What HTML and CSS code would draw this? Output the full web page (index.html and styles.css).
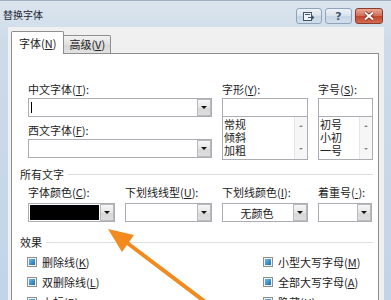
FILE: index.html
```html
<!DOCTYPE html>
<html lang="zh">
<head>
    <meta charset="UTF-8">
    <meta name="viewport" content="width=device-width, initial-scale=1.0">
    <title>替换字体</title>
    <link rel="stylesheet" href="styles.css">
</head>
<body>
    <div class="window">
        <!-- 标题栏 -->
        <div class="titlebar">
            <span class="title">替换字体</span>
            <div class="caption-btns">
                <span class="cbtn">
                    <svg width="13" height="9" viewBox="0 0 13 9"><rect x="0.5" y="0.5" width="8" height="8" fill="#eef3f8" stroke="#44566c"/><rect x="2" y="2" width="5" height="1" fill="#44566c"/><path d="M5 5.5h5.5M8.5 3.5l2 2-2 2" fill="none" stroke="#44566c" stroke-width="1.2"/></svg>
                </span>
                <span class="cbtn help">?</span>
                <span class="cbtn close">
                    <svg width="12" height="10" viewBox="0 0 12 10"><path d="M2 1.5l8 7M10 1.5l-8 7" stroke="#6b2418" stroke-width="3.6"/><path d="M2 1.5l8 7M10 1.5l-8 7" stroke="#fff" stroke-width="2"/></svg>
                </span>
            </div>
        </div>

        <div class="dialog">
            <div class="tabs">
                <span class="tab active">字体(<u>N</u>)</span>
                <span class="tab">高级(<u>V</u>)</span>
            </div>
            <div class="panel">
                <div class="font-grid">
                    <div>
                        <span class="field-label">中文字体(<u>T</u>):</span>
                        <div class="combo"><span class="field"><i class="caret"></i></span><span class="drop"></span></div>
                        <span class="field-label second">西文字体(<u>F</u>):</span>
                        <div class="combo"><span class="field"></span><span class="drop"></span></div>
                    </div>
                    <div>
                        <span class="field-label">字形(<u>Y</u>):</span>
                        <div class="textbox"></div>
                        <div class="listbox">
                            <ul><li>常规</li><li>倾斜</li><li>加粗</li></ul>
                            <div class="scroll"></div>
                        </div>
                    </div>
                    <div>
                        <span class="field-label">字号(<u>S</u>):</span>
                        <div class="textbox"></div>
                        <div class="listbox">
                            <ul><li>初号</li><li>小初</li><li>一号</li></ul>
                            <div class="scroll"></div>
                        </div>
                    </div>
                </div>

                <div class="group">所有文字</div>
                <div class="color-grid">
                    <div>
                        <span class="field-label">字体颜色(<u>C</u>):</span>
                        <div class="combo"><span class="field"><i class="swatch"></i></span><span class="drop"></span></div>
                    </div>
                    <div>
                        <span class="field-label">下划线线型(<u>U</u>):</span>
                        <div class="combo"><span class="field"></span><span class="drop"></span></div>
                    </div>
                    <div>
                        <span class="field-label">下划线颜色(<u>I</u>):</span>
                        <div class="combo"><span class="field center">无颜色</span><span class="drop"></span></div>
                    </div>
                    <div>
                        <span class="field-label">着重号(<u class="dot">·</u>):</span>
                        <div class="combo"><span class="field"></span><span class="drop"></span></div>
                    </div>
                </div>

                <div class="group">效果</div>
                <div class="effects">
                    <label class="check"><i class="box"></i><span>删除线(<u>K</u>)</span></label>
                    <label class="check"><i class="box"></i><span>小型大写字母(<u>M</u>)</span></label>
                    <label class="check"><i class="box"></i><span>双删除线(<u>L</u>)</span></label>
                    <label class="check"><i class="box"></i><span>全部大写字母(<u>A</u>)</span></label>
                    <label class="check"><i class="box"></i><span>上标(<u>P</u>)</span></label>
                    <label class="check"><i class="box"></i><span>隐藏(<u>H</u>)</span></label>
                </div>
            </div>
        </div>

        <!-- 橙色箭头 -->
        <svg class="arrow" viewBox="0 0 391 300">
            <line x1="122" y1="238" x2="208" y2="303" stroke="#f28a1e" stroke-width="4" stroke-linecap="round"/>
            <polygon points="108,228 134,234 122,251" fill="#f28a1e"/>
        </svg>
    </div>
</body>
</html>
```

FILE: styles.css
```css
body {
    margin: 0;
    font-family: "Noto Sans CJK SC", "Noto Sans", sans-serif;
    font-size: 11px;
    color: #222;
    background: #fff;
}
.window {
    position: relative;
    width: 391px;
    height: 300px;
    overflow: hidden;
    box-sizing: border-box;
    border-top: 1px solid #a3b2c2;
    background: linear-gradient(#dce5ee, #cddbe9 40px, #c1d4e8);
}
.titlebar {
    display: flex;
    align-items: flex-start;
    height: 26px;
    padding: 0 8px 0 3px;
}
.title {
    font-size: 10px;
    line-height: 26px;
    padding-top: 1px;
    color: #1b2533;
}
.caption-btns {
    margin-left: auto;
    margin-top: 7px;
    display: flex;
    gap: 3px;
}
.cbtn {
    width: 26px;
    height: 16px;
    box-sizing: border-box;
    border: 1px solid #8fa3ba;
    border-radius: 3px;
    background: linear-gradient(#edf2f7, #d8e2ec 50%, #c6d5e4 51%, #d2dfeb);
    display: flex;
    align-items: center;
    justify-content: center;
}
.cbtn.help {
    width: 27px;
    font-family: "DejaVu Sans", sans-serif;
    font-weight: bold;
    font-size: 11px;
    color: #42566e;
}
.cbtn.close {
    width: 28px;
    border-color: #8a3b2f;
    background: linear-gradient(#eaa896, #d36a55 50%, #c2432d 51%, #d46b50);
}
.dialog {
    margin: 0 7px 0 8px;
    padding: 4px 5px 0 3px;
    background: #f0f0f0;
    height: 300px;
}
.tabs {
    display: flex;
    align-items: flex-end;
}
.tab {
    border: 1px solid #8e8f8f;
    border-bottom: none;
    border-left: none;
    padding: 0 5px;
    height: 17px;
    line-height: 17px;
    background: linear-gradient(#f2f2f2, #e0e0e0 50%, #d6d6d6 51%, #e2e2e2);
    border-radius: 0 2px 0 0;
}
.tab.active {
    position: relative;
    z-index: 1;
    border-left: 1px solid #8e8f8f;
    padding: 0 7px;
    height: 22px;
    line-height: 22px;
    margin-bottom: -1px;
    background: #fff;
    border-radius: 2px 2px 0 0;
}
.panel {
    background: #fff;
    border: 1px solid #8e8f8f;
    height: 300px;
    padding: 27px 5px 0 8px;
}
.field-label {
    display: block;
    height: 16px;
    line-height: 16px;
    margin-bottom: 1px;
    white-space: nowrap;
}
.field-label.second {
    margin-top: 5px;
}
.dot {
    font-family: "Liberation Sans", sans-serif;
}
.font-grid {
    display: grid;
    grid-template-columns: 184px 86px 55px;
    column-gap: 10px;
    margin-left: 8px;
}
.combo {
    display: flex;
    height: 19px;
    box-sizing: border-box;
    border: 1px solid #abadb3;
    background: #fff;
}
.combo .field {
    flex: 1;
    position: relative;
    display: flex;
}
.combo .field.center {
    justify-content: center;
    align-items: center;
    padding-right: 2px;
}
.caret {
    position: absolute;
    left: 2px;
    top: 3px;
    width: 1px;
    height: 11px;
    background: #000;
}
.swatch {
    flex: 1;
    margin: 1px;
    background: #000;
}
.drop {
    width: 12px;
    border: 1px solid #b9b9b9;
    background: linear-gradient(#f5f5f5, #e6e6e6 50%, #d7d7d7 51%, #dedede);
    display: flex;
    align-items: center;
    justify-content: center;
}
.drop::after {
    content: "";
    border-left: 3px solid transparent;
    border-right: 3px solid transparent;
    border-top: 3px solid #111;
}
.textbox {
    height: 19px;
    box-sizing: border-box;
    border: 1px solid #abadb3;
    background: #fff;
}
.listbox {
    display: flex;
    height: 44px;
    margin-top: -1px;
    box-sizing: border-box;
    border: 1px solid #abadb3;
    background: #fff;
}
.listbox ul {
    flex: 1;
    margin: 0;
    padding: 1px 0 0 1px;
    list-style: none;
    line-height: 13px;
}
.scroll {
    width: 12px;
    border-left: 1px solid #e6e6e6;
    background: #f6f6f6;
    display: flex;
    flex-direction: column;
    justify-content: space-between;
    align-items: center;
    padding: 8px 0 9px;
}
.scroll::before {
    content: "";
    border-left: 2px solid transparent;
    border-right: 2px solid transparent;
    border-bottom: 2px solid #8a8a8a;
}
.scroll::after {
    content: "";
    border-left: 2px solid transparent;
    border-right: 2px solid transparent;
    border-top: 2px solid #8a8a8a;
}
.group {
    display: flex;
    align-items: center;
    margin-top: 6px;
    height: 16px;
    line-height: 16px;
}
.group::after {
    content: "";
    flex: 1;
    margin-left: 4px;
    border-top: 1px solid #dedede;
}
.color-grid {
    display: grid;
    grid-template-columns: 87px 87px 86px 54px;
    column-gap: 10px;
    margin: 2px 0 0 8px;
}
.color-grid .field-label {
    margin-bottom: 3px;
}
.color-grid + .group {
    margin-top: 12px;
}
.effects {
    display: grid;
    grid-template-columns: 236px 1fr;
    margin: 2px 0 0 7px;
}
.check {
    display: flex;
    align-items: center;
    gap: 5px;
    height: 20px;
    white-space: nowrap;
}
.box {
    width: 10px;
    height: 10px;
    box-sizing: border-box;
    border: 1px solid #8f8f8f;
    padding: 1px;
    background: linear-gradient(135deg, #6cbbe9, #1f6cab) content-box, #f2f2f2;
}
.arrow {
    position: absolute;
    left: 0;
    top: 0;
    width: 391px;
    height: 300px;
    pointer-events: none;
}
```
